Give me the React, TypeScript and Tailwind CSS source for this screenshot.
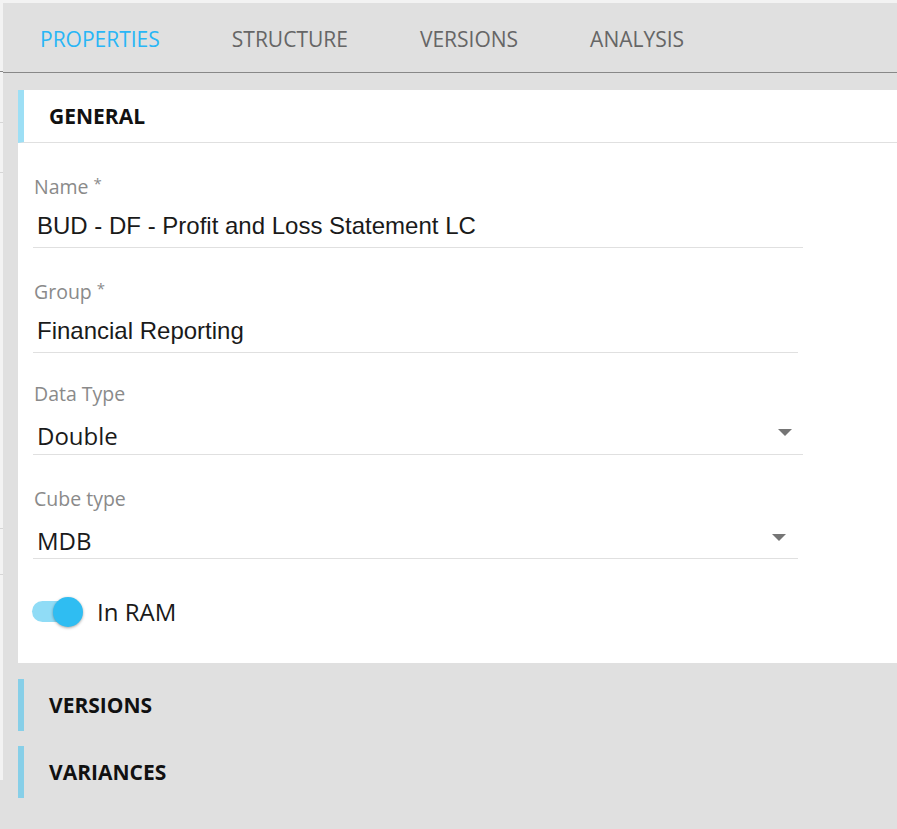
import React from "react";

const OPEN = { fontFamily: '"Open Sans", "Noto Sans", sans-serif' };
const ARIAL = { fontFamily: '"Liberation Sans", Arial, sans-serif' };

function Arrow() {
  return (
    <svg width="14" height="7" viewBox="0 0 14 7" className="block">
      <polygon points="0,0 14,0 7,7" fill="#757575" />
    </svg>
  );
}

export default function App() {
  return (
    <div className="w-[897px] h-[829px] bg-[#e0e0e0] flex flex-col overflow-hidden" style={OPEN}>
      <div className="h-[3px] bg-[#f3f3f3] shrink-0" />
      <div className="flex flex-1">
        {/* left strip */}
        <div className="w-[3px] h-[777px] bg-[#f3f3f3] flex flex-col shrink-0">
          <div className="h-[69px] border-b border-[#888]" />
          <div className="h-[51px] border-b border-[#d6d6d6]" />
          <div className="h-[50px] border-b border-[#d6d6d6]" />
          <div className="h-[356px] border-b border-[#d6d6d6]" />
          <div className="h-[46px] border-b border-[#d6d6d6]" />
        </div>
        <div className="flex-1 flex flex-col">
          {/* tabs */}
          <div className="h-[70px] border-b border-[#888] flex items-center pl-[37px] gap-[72px] text-[21px] pt-[5px]">
            <span className="text-[#29b6f6]">PROPERTIES</span>
            <span className="text-[#666]">STRUCTURE</span>
            <span className="text-[#666]">VERSIONS</span>
            <span className="text-[#666]">ANALYSIS</span>
          </div>
          {/* panel */}
          <div className="mt-[17px] ml-[15px] bg-white">
            <div className="h-[53px] border-l-[6px] border-[#9ddff5] border-b border-b-[#e0e0e0] flex items-center pl-[25px] pt-[2px] font-bold text-[21px] text-[#111]">
              GENERAL
            </div>
            <div className="pl-[15px] pt-[32px] pb-[36px]">
              {/* Name */}
              <div className="w-[770px] border-b border-[#e0e0e0] pb-[7px]">
                <div className="h-[24px] leading-[24px] pl-[1px] text-[19.5px] text-[#8a8a8a]">Name <span className="relative -top-[5px] text-[15px]">*</span></div>
                <div className="mt-[13px] h-[28px] leading-[28px] pl-[4px] text-[24px] text-[#1a1a1a]" style={ARIAL}>BUD - DF - Profit and Loss Statement LC</div>
              </div>
              {/* Group */}
              <div className="mt-[32px] w-[765px] border-b border-[#e0e0e0] pb-[7px]">
                <div className="h-[24px] leading-[24px] pl-[1px] text-[19.5px] text-[#8a8a8a]">Group <span className="relative -top-[5px] text-[15px]">*</span></div>
                <div className="mt-[13px] h-[28px] leading-[28px] pl-[4px] text-[24px] text-[#1a1a1a]" style={ARIAL}>Financial Reporting</div>
              </div>
              {/* Data Type */}
              <div className="mt-[29px] w-[770px] border-b border-[#e0e0e0] pb-[4px]">
                <div className="h-[24px] leading-[24px] pl-[1px] text-[19.5px] text-[#8a8a8a]">Data Type</div>
                <div className="mt-[16px] h-[28px] flex items-center justify-between pl-[4px] pr-[11px] text-[24px] text-[#1a1a1a]">
                  <span>Double</span>
                  <span className="mt-[-8px]"><Arrow /></span>
                </div>
              </div>
              {/* Cube type */}
              <div className="mt-[32px] w-[765px] border-b border-[#e0e0e0] pb-[3px]">
                <div className="h-[24px] leading-[24px] pl-[1px] text-[19.5px] text-[#8a8a8a]">Cube type</div>
                <div className="mt-[16px] h-[28px] flex items-center justify-between pl-[4px] pr-[12px] text-[24px] text-[#1a1a1a]">
                  <span>MDB</span>
                  <span className="mt-[-8px]"><Arrow /></span>
                </div>
              </div>
              {/* Toggle */}
              <div className="mt-[38px] h-[30px] flex items-center">
                <div className="relative w-[52px] h-[30px] ml-[-1px]">
                  <div className="absolute left-0 top-[4px] w-[46px] h-[21px] rounded-full bg-[#90dcf6]" />
                  <div className="absolute left-[21px] top-0 w-[30px] h-[30px] rounded-full bg-[#2fbdf2] shadow-[0_1px_3px_rgba(0,0,0,0.35)]" />
                </div>
                <span className="ml-[13px] text-[24px] text-[#1a1a1a]">In RAM</span>
              </div>
            </div>
          </div>
          {/* collapsed sections */}
          <div className="mt-[16px] ml-[15px] h-[52px] border-l-[6px] border-[#87cfe8] flex items-center pl-[25px] pt-[2px] font-bold text-[21px] text-[#111]">
            VERSIONS
          </div>
          <div className="mt-[15px] ml-[15px] h-[52px] border-l-[6px] border-[#87cfe8] flex items-center pl-[25px] pt-[2px] font-bold text-[21px] text-[#111]">
            VARIANCES
          </div>
        </div>
      </div>
    </div>
  );
}
